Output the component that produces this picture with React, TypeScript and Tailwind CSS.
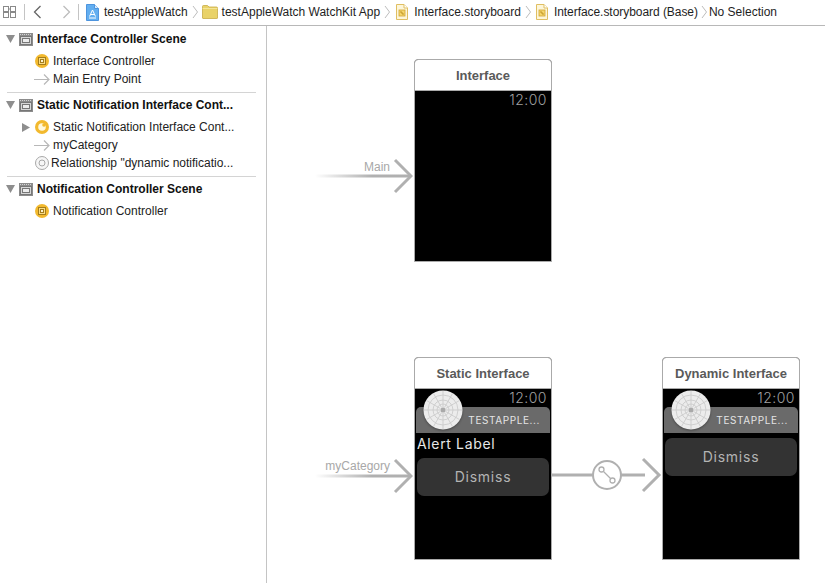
import type { ReactNode } from "react";

const sans = "font-['Liberation_Sans',Arial,sans-serif]";

function Sep() {
  return (
    <svg width="7" height="14" viewBox="0 0 7 14" className="shrink-0">
      <path d="M1 1l4.500 6L1 13" fill="none" stroke="#bdbdbd" strokeWidth="1" />
    </svg>
  );
}

function ProjectIcon() {
  return (
    <svg width="13" height="17" viewBox="0 0 13 17" className="shrink-0">
      <path d="M.5.5h8l4 4v12H.5z" fill="#62aef0" stroke="#4d94de" />
      <path d="M8.500.5v4h4" fill="#d8eafb" stroke="#4d94de" />
      <path d="M3.500 12.500l3-6.500 3 6.500M4.500 10.500h4" fill="none" stroke="#fff" strokeWidth="1" />
      <path d="M3 14h7" stroke="#fff" strokeWidth="1" />
    </svg>
  );
}

function FolderIcon() {
  return (
    <svg width="16" height="14" viewBox="0 0 16 14" className="shrink-0">
      <path d="M.5 1.500a1 1 0 0 1 1-1h4l1.500 1.500h7.500a1 1 0 0 1 1 1V13a.6.6 0 0 1-.6.5H1a.6.6 0 0 1-.5-.5z" fill="#e9d268" stroke="#c8ab45" strokeWidth="0.8" />
      <path d="M.6 3.500h14.800" stroke="#f4e596" />
    </svg>
  );
}

function StoryboardIcon() {
  return (
    <svg width="12" height="16" viewBox="0 0 12 16" className="shrink-0">
      <path d="M.5.5h7.500l3.500 3.500v11.500H.5z" fill="#fdf6da" stroke="#e0bf62" />
      <path d="M8 .5V4h3.500" fill="#fff" stroke="#e0bf62" />
      <rect x="3" y="6" width="6" height="6" fill="#f6d76c" stroke="#cfa433" strokeWidth="0.8" />
      <path d="M4 8h2v2h2" fill="none" stroke="#b5871b" strokeWidth="0.8" />
    </svg>
  );
}

function SceneIcon() {
  return (
    <svg width="14" height="13" viewBox="0 0 14 13" className="shrink-0">
      <rect width="14" height="13" fill="#8c8c8c" />
      <path d="M1 1.500h12" stroke="#d4d4d4" strokeDasharray="1 1" />
      <rect x="1.500" y="3.500" width="11" height="8" fill="#d6d6d6" stroke="#777" />
      <rect x="3.500" y="5.500" width="7" height="4" fill="#ececec" stroke="#777" />
    </svg>
  );
}

function Disclosure({ open }: { open: boolean }) {
  return open ? (
    <svg width="9" height="8" viewBox="0 0 9 8" className="shrink-0">
      <path d="M0 0h9L4.500 8z" fill="#8e8e8e" />
    </svg>
  ) : (
    <svg width="8" height="9" viewBox="0 0 8 9" className="shrink-0">
      <path d="M0 0l8 4.500L0 9z" fill="#8e8e8e" />
    </svg>
  );
}

function ControllerIcon({ variant }: { variant?: "notification" }) {
  return (
    <svg width="14" height="14" viewBox="0 0 14 14" className="shrink-0">
      <circle cx="7" cy="7" r="7" fill="#f2b92e" />
      {variant === "notification" ? (
        <>
          <circle cx="7" cy="7" r="3.800" fill="#fff8dc" />
          <circle cx="9" cy="5" r="1.800" fill="#f2b92e" />
        </>
      ) : (
        <>
          <rect x="3.500" y="3.500" width="7" height="7" fill="#f9dd86" stroke="#a57d1c" />
          <rect x="5.500" y="5.500" width="3" height="3" fill="#fdf3d0" stroke="#a57d1c" />
        </>
      )}
    </svg>
  );
}

function EntryIcon() {
  return (
    <svg width="16" height="11" viewBox="0 0 16 11" className="shrink-0">
      <path d="M0 5.500h15M10 .5l5 5-5 5" fill="none" stroke="#b8b8b8" strokeWidth="1.200" />
    </svg>
  );
}

function RelationshipIcon() {
  return (
    <svg width="14" height="14" viewBox="0 0 14 14" className="shrink-0">
      <circle cx="7" cy="7" r="6.500" fill="#f6f6f6" stroke="#a8a8a8" />
      <circle cx="7" cy="7" r="3" fill="none" stroke="#a8a8a8" />
    </svg>
  );
}

function SceneHeader({ title }: { title: string }) {
  return (
    <div className="flex h-5 items-center pl-[6px]">
      <Disclosure open />
      <span className="ml-[4px] flex"><SceneIcon /></span>
      <span className="ml-[4px] text-[12px] font-bold text-[#111111] whitespace-nowrap">{title}</span>
    </div>
  );
}

function Row({ icon, label, gap = "ml-[4px]", arrow }: { icon: ReactNode; label: string; gap?: string; arrow?: boolean }) {
  return (
    <div className="flex h-[18px] items-center">
      <div className="flex w-[35px] shrink-0 items-center justify-start pl-[22px]">
        {arrow && <Disclosure open={false} />}
      </div>
      <div className="flex w-[14px] shrink-0 justify-center">{icon}</div>
      <span className={`${gap} text-[12px] text-[#222222] whitespace-nowrap`}>{label}</span>
    </div>
  );
}

function Sidebar() {
  return (
    <aside className="w-[267px] shrink-0 border-r border-[#c4c4c4] pt-[3px]">
      <SceneHeader title="Interface Controller Scene" />
      <div className="mt-[3px]">
        <Row icon={<ControllerIcon />} label="Interface Controller" />
        <Row icon={<EntryIcon />} label="Main Entry Point" />
      </div>
      <div className="ml-[7px] mr-[10px] mt-[4px] mb-[2px] border-t border-[#d4d4d4]" />
      <SceneHeader title="Static Notification Interface Cont..." />
      <div className="mt-[3px]">
        <Row arrow icon={<ControllerIcon variant="notification" />} label="Static Notification Interface Cont..." />
        <Row icon={<EntryIcon />} label="myCategory" />
        <Row icon={<RelationshipIcon />} label="Relationship &quot;dynamic notificatio..." gap="ml-[2px]" />
      </div>
      <div className="ml-[7px] mr-[10px] mt-[4px] mb-[2px] border-t border-[#d4d4d4]" />
      <SceneHeader title="Notification Controller Scene" />
      <div className="mt-[3px]">
        <Row icon={<ControllerIcon />} label="Notification Controller" />
      </div>
    </aside>
  );
}

function Toolbar() {
  return (
    <header className="flex h-[26px] shrink-0 items-center border-b border-[#b8b8b8] pb-px text-[12px] text-[#1e1e1e]">
      <svg width="13" height="12" viewBox="0 0 13 12" className="ml-[3px] shrink-0">
        <g fill="none" stroke="#8a8a8a">
          <rect x="0.500" y="0.500" width="5" height="5" />
          <rect x="7.500" y="0.500" width="5" height="5" />
          <rect x="0.500" y="6.500" width="5" height="5" />
          <rect x="7.500" y="6.500" width="5" height="5" />
          <path d="M5.500 3h2M3 5.500v1M10 5.500v1" />
        </g>
      </svg>
      <div className="ml-[8px] h-[16px] w-px bg-[#c4c4c4]" />
      <svg width="9" height="14" viewBox="0 0 9 14" className="ml-[8px] shrink-0">
        <path d="M7.500 1L1.500 7l6 6" fill="none" stroke="#666" strokeWidth="1.300" />
      </svg>
      <svg width="9" height="14" viewBox="0 0 9 14" className="ml-[20px] shrink-0">
        <path d="M1.500 1l6 6-6 6" fill="none" stroke="#bcbcbc" strokeWidth="1.300" />
      </svg>
      <div className="ml-[7px] h-[16px] w-px bg-[#c4c4c4]" />
      <span className="ml-[7px] flex"><ProjectIcon /></span>
      <span className="ml-[5px]">testAppleWatch</span>
      <span className="ml-[4px] flex"><Sep /></span>
      <span className="ml-[3px] flex"><FolderIcon /></span>
      <span className="ml-[4px]">testAppleWatch WatchKit App</span>
      <span className="ml-[4px] flex"><Sep /></span>
      <span className="ml-[5px] flex"><StoryboardIcon /></span>
      <span className="ml-[6px]">Interface.storyboard</span>
      <span className="ml-[4px] flex"><Sep /></span>
      <span className="ml-[4px] flex"><StoryboardIcon /></span>
      <span className="ml-[6px] tracking-[-0.05px]">Interface.storyboard (Base)</span>
      <span className="ml-[3px] flex"><Sep /></span>
      <span className="ml-[1px]">No Selection</span>
    </header>
  );
}

function Disc() {
  const spokes = Array.from({ length: 12 }, (_, i) => (i * Math.PI) / 6);
  return (
    <svg width="40" height="40" viewBox="0 0 40 40" className="absolute left-[8px] top-[1px] drop-shadow-[0_1px_1px_rgba(0,0,0,0.35)]">
      <circle cx="20" cy="20" r="19.500" fill="#ececec" />
      <g fill="none" stroke="#c8c8c8" strokeWidth="0.800">
        <circle cx="20" cy="20" r="15" />
        <circle cx="20" cy="20" r="10" />
        <circle cx="20" cy="20" r="6" />
        {spokes.map((a) => (
          <path key={a} d={`M${20 + 3 * Math.cos(a)} ${20 + 3 * Math.sin(a)}L${20 + 19 * Math.cos(a)} ${20 + 19 * Math.sin(a)}`} />
        ))}
      </g>
      <circle cx="20" cy="20" r="2.500" fill="#a9a9a9" />
    </svg>
  );
}

const watchFont = "font-['Inter',sans-serif]";

function SceneFrame({ title, className, children }: { title: string; className: string; children?: ReactNode }) {
  return (
    <section className={`absolute w-[138px] overflow-hidden rounded-t-[4px] border border-[#aaaaaa] bg-black ${className}`}>
      <div className="flex h-[31px] items-center justify-center border-b border-[#aaaaaa] bg-white pt-px text-[13px] font-bold text-[#5a5a5a]">
        {title}
      </div>
      <div className={`relative h-full ${watchFont}`}>
        <div className="absolute right-[4px] top-0 text-[14px] font-light leading-[17px] tracking-[0.5px] text-[#a0a0a0]">12:00</div>
        {children}
      </div>
    </section>
  );
}

function NotificationHead() {
  return (
    <div className="absolute left-0 top-0 h-[45px] w-full">
      <div className="absolute inset-x-px top-[18px] flex h-[26px] items-center justify-end rounded-t-[5px] bg-[#6a6a6a] pr-[10px] text-[10px] tracking-[0.6px] text-[#e4e4e4]">
        TESTAPPLE...
      </div>
      <Disc />
    </div>
  );
}

function DismissButton({ className }: { className: string }) {
  return (
    <div className={`absolute inset-x-[2px] flex h-[38px] items-center justify-center rounded-[7px] bg-[#333333] pb-px text-[14px] tracking-[0.75px] text-[#b4b4b4] ${className}`}>
      Dismiss
    </div>
  );
}

function Arrow({ label, className, labelTop }: { label: string; className: string; labelTop: string }) {
  return (
    <div className={`absolute h-[36px] w-[98px] ${className}`}>
      <span className={`absolute right-[23px] ${labelTop} ${sans} text-[12px] leading-none text-[#a8a8a8]`}>{label}</span>
      <svg width="98" height="36" viewBox="0 0 98 36" className="absolute inset-0">
        <defs>
          <linearGradient id={`fade-${label}`} x1="0" x2="1" y1="0" y2="0">
            <stop offset="0" stopColor="#b0b0b0" stopOpacity="0" />
            <stop offset="0.6" stopColor="#b0b0b0" />
          </linearGradient>
        </defs>
        <rect x="0" y="16.500" width="95" height="3" fill={`url(#fade-${label})`} />
        <path d="M80 2l16 16-16 16" fill="none" stroke="#b0b0b0" strokeWidth="3" />
      </svg>
    </div>
  );
}

function Segue() {
  return (
    <svg width="112" height="36" viewBox="0 0 112 36" className="absolute left-[284px] top-[431px]">
      <path d="M0 18h94" stroke="#b0b0b0" strokeWidth="3" />
      <path d="M92 2l16 16-16 16" fill="none" stroke="#b0b0b0" strokeWidth="3" />
      <circle cx="56" cy="18" r="14" fill="#fff" stroke="#b0b0b0" strokeWidth="2" />
      <circle cx="50.500" cy="12.500" r="2.500" fill="none" stroke="#b0b0b0" strokeWidth="1.300" />
      <circle cx="61.500" cy="23.500" r="2.500" fill="none" stroke="#b0b0b0" strokeWidth="1.300" />
      <path d="M52.500 14.500l7 7" stroke="#b0b0b0" strokeWidth="1.300" />
    </svg>
  );
}

function Canvas() {
  return (
    <main className="relative flex-1 overflow-hidden bg-white">
      <Arrow label="Main" labelTop="top-[3px]" className="left-[48px] top-[132px]" />
      <SceneFrame title="Interface" className="left-[147px] top-[33px] h-[203px]" />

      <Arrow label="myCategory" labelTop="top-[2px]" className="left-[48px] top-[432px]" />
      <SceneFrame title="Static Interface" className="left-[147px] top-[331px] h-[203px]">
        <NotificationHead />
        <div className="absolute left-[2px] top-[45px] text-[14px] leading-[20px] tracking-[0.65px] text-[#e6e6e6]">Alert Label</div>
        <DismissButton className="top-[69px]" />
      </SceneFrame>
      <Segue />
      <SceneFrame title="Dynamic Interface" className="left-[395px] top-[331px] h-[203px]">
        <NotificationHead />
        <DismissButton className="top-[49px]" />
      </SceneFrame>
    </main>
  );
}

export default function App() {
  return (
    <div className={`flex h-[583px] w-[825px] flex-col overflow-hidden bg-white ${sans}`}>
      <Toolbar />
      <div className="flex min-h-0 flex-1">
        <Sidebar />
        <Canvas />
      </div>
    </div>
  );
}
